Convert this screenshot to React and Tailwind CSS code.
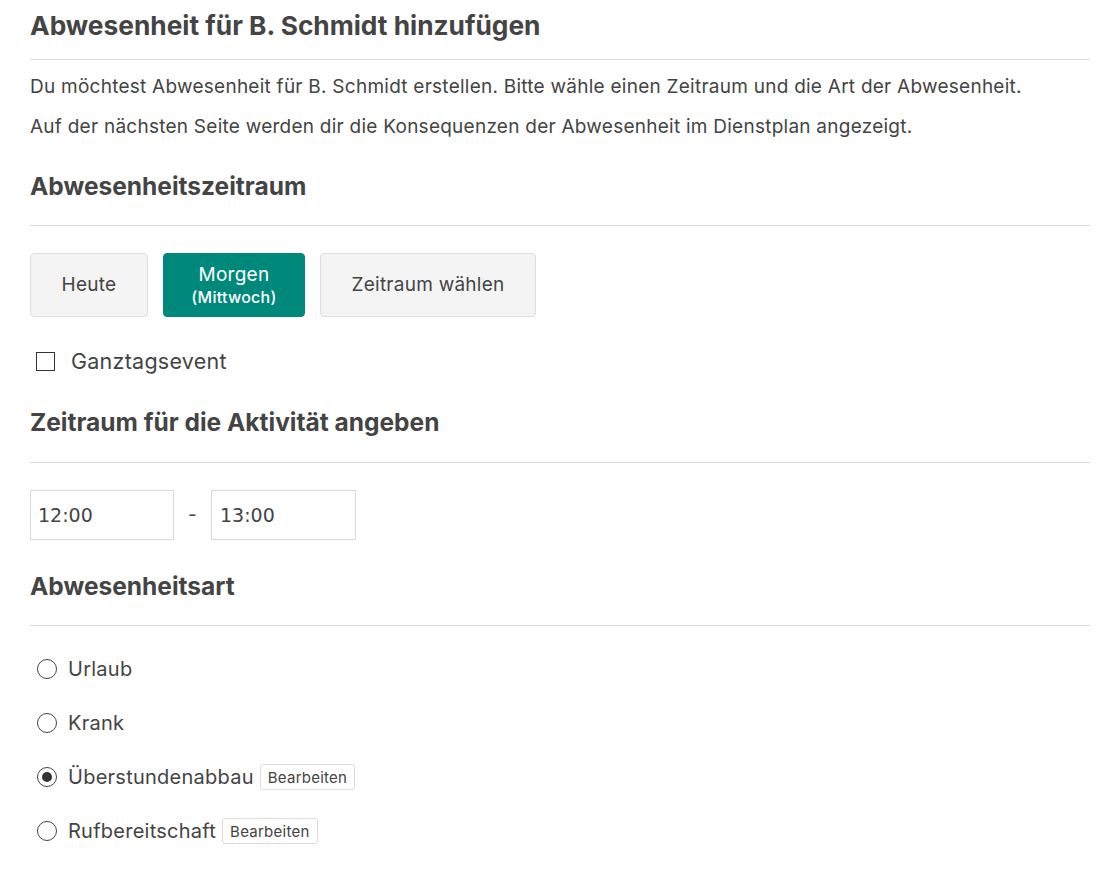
import React, { useState } from 'react';

// Abwesenheit dialog page
const Divider = ({ className = '' }) => <div className={`h-px bg-[#dcdcdc] ${className}`} />;

const SectionHeading = ({ children, className = '' }) => (
  <h2 className={`text-[24.5px] leading-[30px] font-bold text-[#444] tracking-normal ${className}`}>{children}</h2>
);

const Radio = ({ checked, onClick }) => (
  <span
    onClick={onClick}
    className="flex items-center justify-center w-[20px] h-[20px] rounded-full border border-[#444] bg-white shrink-0 cursor-pointer"
  >
    {checked && <span className="w-[10px] h-[10px] rounded-full bg-[#333]" />}
  </span>
);

const EditButton = () => (
  <button className="ml-[6px] h-[26px] px-[7px] text-[15px] leading-none text-[#444] bg-white border border-[#dcdcdc] rounded-[3px]">
    Bearbeiten
  </button>
);

export default function App() {
  const [period, setPeriod] = useState('morgen');
  const [allDay, setAllDay] = useState(false);
  const [type, setType] = useState('ueberstunden');

  const types = [
    { id: 'urlaub', label: 'Urlaub', edit: false },
    { id: 'krank', label: 'Krank', edit: false },
    { id: 'ueberstunden', label: 'Überstundenabbau', edit: true },
    { id: 'ruf', label: 'Rufbereitschaft', edit: true },
  ];

  const btn = (active) =>
    `flex flex-col items-center justify-center h-[64px] rounded-[4px] border ${
      active ? 'bg-[#00897b] border-[#00897b] text-white' : 'bg-[#f4f4f4] border-[#dddddd] text-[#444]'
    }`;

  return (
    <div className="min-h-[874px] bg-white px-[30px] text-[#444] tracking-[0.25px]" style={{ fontFamily: 'Inter, "Noto Sans", sans-serif' }}>
      <h1 className="pt-[10px] text-[26.3px] leading-[31px] font-bold tracking-normal">
        Abwesenheit für B. Schmidt hinzufügen
      </h1>
      <Divider className="mt-[18px]" />

      <p className="mt-[13px] text-[19px] leading-[28px]">
        Du möchtest Abwesenheit für B. Schmidt erstellen. Bitte wähle einen Zeitraum und die Art der Abwesenheit.
      </p>
      <p className="mt-[12px] text-[19px] leading-[28px]">
        Auf der nächsten Seite werden dir die Konsequenzen der Abwesenheit im Dienstplan angezeigt.
      </p>

      <SectionHeading className="mt-[30px]">Abwesenheitszeitraum</SectionHeading>
      <Divider className="mt-[24px]" />

      <div className="mt-[27px] flex gap-[15px]">
        <button className={`${btn(period === 'heute')} w-[118px]`} onClick={() => setPeriod('heute')}>
          <span className="text-[19px] leading-[24px]">Heute</span>
        </button>
        <button className={`${btn(period === 'morgen')} w-[142px]`} onClick={() => setPeriod('morgen')}>
          <span className="text-[19px] leading-[24px]">Morgen</span>
          <span className="text-[16px] leading-[20px] font-medium">(Mittwoch)</span>
        </button>
        <button className={`${btn(period === 'zeitraum')} w-[216px]`} onClick={() => setPeriod('zeitraum')}>
          <span className="text-[19px] leading-[24px]">Zeitraum wählen</span>
        </button>
      </div>

      <label className="mt-[30px] flex items-center h-[28px] pl-[6px] cursor-pointer" onClick={() => setAllDay(!allDay)}>
        <span className="w-[19px] h-[19px] border-[1.5px] border-[#333] bg-white flex items-center justify-center text-[14px]">
          {allDay ? '✓' : ''}
        </span>
        <span className="ml-[16px] text-[21.5px]">Ganztagsevent</span>
      </label>

      <SectionHeading className="mt-[32px]">Zeitraum für die Aktivität angeben</SectionHeading>
      <Divider className="mt-[25px]" />

      <div className="mt-[27px] flex items-center">
        <input
          defaultValue="12:00"
          className="w-[144px] h-[50px] border border-[#d9d9d9] px-[7px] text-[19px] text-[#444] outline-none tracking-normal"
          style={{ fontFamily: '"DejaVu Sans", sans-serif' }}
        />
        <span className="w-[37px] text-center text-[19px]">-</span>
        <input
          defaultValue="13:00"
          className="w-[145px] h-[50px] border border-[#d9d9d9] px-[8px] text-[19px] text-[#444] outline-none tracking-normal"
          style={{ fontFamily: '"DejaVu Sans", sans-serif' }}
        />
      </div>

      <SectionHeading className="mt-[31px]">Abwesenheitsart</SectionHeading>
      <Divider className="mt-[24px]" />

      <div className="mt-[29px] flex flex-col gap-[26px] pl-[7px]">
        {types.map((t) => (
          <div key={t.id} className="flex items-center h-[28px]">
            <Radio checked={type === t.id} onClick={() => setType(t.id)} />
            <span className="ml-[11px] text-[20px] cursor-pointer" onClick={() => setType(t.id)}>
              {t.label}
            </span>
            {t.edit && <EditButton />}
          </div>
        ))}
      </div>
    </div>
  );
}
